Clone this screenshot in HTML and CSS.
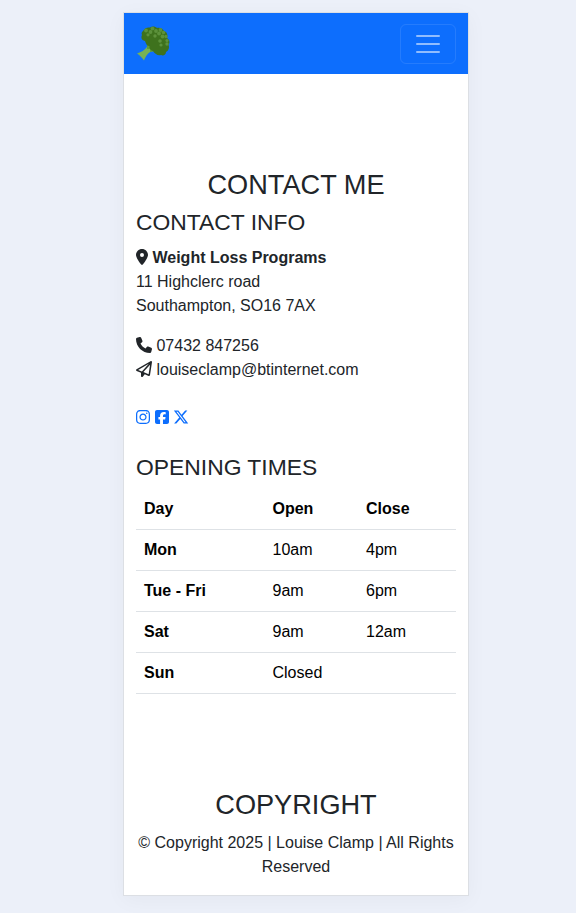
FILE: index.html
```html
<!DOCTYPE html>
<html lang="en">
<head>
<meta charset="utf-8">
<title>Contact - Weight Loss Programs</title>
<link rel="stylesheet" href="styles.css">
</head>
<body>
<main class="page">
  <nav class="navbar">
    <svg class="brand" viewBox="0 0 36 36" aria-label="Broccoli">
      <path fill="#77b255" d="M12 18 C11 23 6 26 1 27.500 C4 29.500 6 31.500 8 34.500 C10 30 12 26 17 25 L20 18Z"/>
      <path fill="#5c9b3d" d="M11 18 L11 23 L14 23 L14 26 L20 25 L18 17Z"/>
      <path fill="#3e721d" d="M7 5 C9 2 11 1 14 1.500 C16 0 19 0 21 2 C24 1 27 3 28 5 C31 6 32 9 31 12 C34 14 34 17 32.500 19 C34 22 32 25 30 26 C30 29 27 30 25 29 C22 30 19 28 17 25 C15 25 13 22 13.500 20 C11 20 10 18 9 15 C5 14 5 11 6 9 C5 7 6 6 7 5Z"/>
      <g fill="#5c913b"><circle cx="10" cy="4.500" r="1.900"/><circle cx="16.500" cy="2.600" r="1.900"/><circle cx="14.500" cy="6" r="1.900"/><circle cx="20" cy="5" r="1.900"/><circle cx="24.500" cy="4" r="1.900"/><circle cx="12" cy="8.800" r="1.600"/><circle cx="19" cy="10" r="1.700"/><circle cx="23" cy="7.500" r="1.900"/><circle cx="27.500" cy="6.500" r="1.800"/><circle cx="26.500" cy="10.500" r="1.900"/><circle cx="30" cy="10.500" r="1.700"/><circle cx="24" cy="15" r="1.800"/><circle cx="31" cy="14.500" r="1.600"/><circle cx="31" cy="18" r="1.700"/><circle cx="25" cy="19" r="1.600"/></g>
    </svg>
    <button class="toggler" aria-label="Toggle navigation">
      <svg viewBox="0 0 30 30"><path stroke="#fff" stroke-opacity=".55" stroke-linecap="round" stroke-miterlimit="10" stroke-width="2" d="M4 7h22M4 15h22M4 23h22"/></svg>
    </button>
  </nav>

  <section class="contact">
    <h1>CONTACT ME</h1>
    <h3>CONTACT INFO</h3>
    <p><svg class="icon icon-pin" viewBox="0 0 384 512"><path d="M215.700 499.200C267 435 384 279.400 384 192C384 86 298 0 192 0S0 86 0 192c0 87.400 117 243 168.300 307.200c12.300 15.300 35.100 15.300 47.400 0zM192 128a64 64 0 1 1 0 128 64 64 0 1 1 0-128z"/></svg> <strong>Weight Loss Programs</strong><br>11 Highclerc road<br>Southampton, SO16 7AX</p>
    <p class="details"><svg class="icon icon-wide" viewBox="0 0 512 512"><path d="M164.900 24.600c-7.700-18.600-28-28.500-47.400-23.200l-88 24C12.100 30.200 0 46 0 64C0 311.400 200.600 512 448 512c18 0 33.800-12.100 38.600-29.500l24-88c5.300-19.400-4.600-39.700-23.200-47.400l-96-40c-16.300-6.800-35.200-2.100-46.300 11.600L304.700 368C234.300 334.700 177.300 277.700 144 207.300L193.300 167c13.700-11.200 18.400-30 11.600-46.300l-40-96z"/></svg> 07432 847256<br><svg class="icon icon-wide" viewBox="0 0 512 512"><path d="M16.100 260.200c-22.600 12.900-20.500 47.300 3.600 57.300L160 376V479.300c0 18.100 14.600 32.700 32.700 32.700c9.700 0 18.900-4.300 25.100-11.800l62-74.300 123.900 51.600c18.900 7.900 40.800-4.500 43.900-24.700l64-416c1.900-12.100-3.400-24.300-13.500-31.200s-23.300-7.500-34-1.400l-448 256zm52.100 25.500L409.700 90.600 190.100 336l1.200 1L68.200 285.700zM403.300 425.400L236.700 355.900 450.800 116.600 403.300 425.400z"/></svg> louiseclamp@btinternet.com</p>
    <p class="social">
      <a href="#" aria-label="Instagram"><svg class="icon icon-medium" viewBox="0 0 448 512"><path d="M224.100 141c-63.600 0-114.900 51.300-114.900 114.900s51.300 114.900 114.900 114.900S339 319.500 339 255.900 287.700 141 224.100 141zm0 189.600c-41.100 0-74.700-33.500-74.700-74.700s33.500-74.700 74.700-74.700 74.700 33.500 74.700 74.700-33.600 74.700-74.700 74.700zm146.400-194.300c0 14.900-12 26.800-26.800 26.800-14.900 0-26.800-12-26.800-26.800s12-26.800 26.800-26.800 26.800 12 26.800 26.800zm76.100 27.200c-1.700-35.900-9.900-67.700-36.200-93.900-26.200-26.200-58-34.400-93.900-36.200-37-2.100-147.900-2.100-184.900 0-35.800 1.700-67.600 9.900-93.900 36.100s-34.400 58-36.200 93.900c-2.100 37-2.100 147.900 0 184.900 1.700 35.900 9.900 67.700 36.200 93.900s58 34.400 93.900 36.200c37 2.100 147.900 2.100 184.900 0 35.900-1.700 67.700-9.900 93.900-36.200 26.200-26.200 34.400-58 36.200-93.900 2.100-37 2.100-147.800 0-184.800zM398.800 388c-7.800 19.600-22.900 34.700-42.600 42.600-29.500 11.700-99.500 9-132.100 9s-102.700 2.600-132.100-9c-19.600-7.800-34.700-22.900-42.600-42.600-11.700-29.500-9-99.500-9-132.100s-2.600-102.700 9-132.100c7.800-19.600 22.900-34.700 42.600-42.600 29.500-11.700 99.500-9 132.100-9s102.700-2.600 132.100 9c19.600 7.800 34.700 22.900 42.600 42.600 11.700 29.500 9 99.500 9 132.100s2.700 102.700-9 132.100z"/></svg></a>
      <a href="#" aria-label="Facebook"><svg class="icon icon-medium" viewBox="0 0 448 512"><path d="M64 32C28.700 32 0 60.700 0 96V416c0 35.300 28.700 64 64 64h98.200V334.200H109.400V256h52.800V222.300c0-87.100 39.400-127.500 125-127.500c16.200 0 44.200 3.200 55.700 6.400V172c-6-.6-16.500-1-29.600-1c-42 0-58.200 15.900-58.200 57.200V256h83.600l-14.400 78.200H255V480H384c35.300 0 64-28.700 64-64V96c0-35.300-28.700-64-64-64H64z"/></svg></a>
      <a class="x-link" href="#" aria-label="X"><svg class="icon icon-wide" viewBox="0 0 512 512"><path d="M389.200 48h70.600L305.600 224.200 487 464H345L233.700 318.600 106.500 464H35.800L200.700 275.500 26.800 48H172.400L272.900 180.900 389.200 48zM364.400 421.800h39.100L151.100 88h-42L364.400 421.800z"/></svg></a>
    </p>
    <h3 class="times-title">OPENING TIMES</h3>
    <table>
      <colgroup><col class="col-day"><col class="col-open"><col></colgroup>
      <thead><tr><th>Day</th><th>Open</th><th>Close</th></tr></thead>
      <tbody>
        <tr><th>Mon</th><td>10am</td><td>4pm</td></tr>
        <tr><th>Tue - Fri</th><td>9am</td><td>6pm</td></tr>
        <tr><th>Sat</th><td>9am</td><td>12am</td></tr>
        <tr><th>Sun</th><td>Closed</td><td></td></tr>
      </tbody>
    </table>
  </section>

  <footer>
    <h1>COPYRIGHT</h1>
    <p>© Copyright 2025 | Louise Clamp | All Rights Reserved</p>
  </footer>
</main>
</body>
</html>
```
FILE: styles.css
```css
* { box-sizing: border-box; }
body {
  margin: 0;
  padding-top: 12px;
  min-height: 913px;
  background: #ecf0f9;
  color: #212529;
  font: 16px/1.5 "Liberation Sans", Arial, sans-serif;
}
.page {
  width: 346px;
  height: 884px;
  margin-left: 123px;
  background: #fff;
  border: 1px solid #dcdfe4;
  box-shadow: 0 4px 20px rgba(0, 0, 0, .04);
}
.navbar {
  display: flex;
  align-items: center;
  justify-content: space-between;
  height: 61px;
  padding: 0 12px;
  background: #0d6efd;
}
.brand { width: 36px; height: 36px; }
.toggler {
  width: 56px;
  height: 40px;
  padding: 4px 12px;
  border: 1px solid rgba(255, 255, 255, .1);
  border-radius: 6px;
  background: transparent;
}
.toggler svg { display: block; width: 30px; height: 30px; }
h1, h3 { margin: 0 0 8px; font-weight: 400; }
h1 { font-size: 27.16px; line-height: 32px; text-align: center; }
h3 { font-size: 22.86px; line-height: 27px; margin-bottom: 10px; }
p { margin: 0 0 16px; }
.contact { padding: 95px 12px 0; }
.details { margin-bottom: 24px; }
.social { margin-bottom: 24px; }
.times-title { margin-bottom: 7.9px; }
a { color: #0d6efd; }
.icon { height: 16px; vertical-align: -2px; fill: currentColor; }
.icon-pin { width: 12px; }
.icon-medium { width: 14px; }
.social .icon-medium { margin-right: .4px; }
.x-link { margin-left: -1px; }
.icon-wide { width: 16px; }
table {
  width: 100%;
  table-layout: fixed;
  border-collapse: collapse;
  color: #000;
}
.col-day { width: 128.5px; }
.col-open { width: 93.5px; }
th, td {
  height: 41px;
  padding: 8px;
  border-bottom: 1px solid #dee2e6;
  text-align: left;
}
footer { padding: 94.6px 12px 0; text-align: center; }
footer h1 { margin-bottom: 10px; }
```
